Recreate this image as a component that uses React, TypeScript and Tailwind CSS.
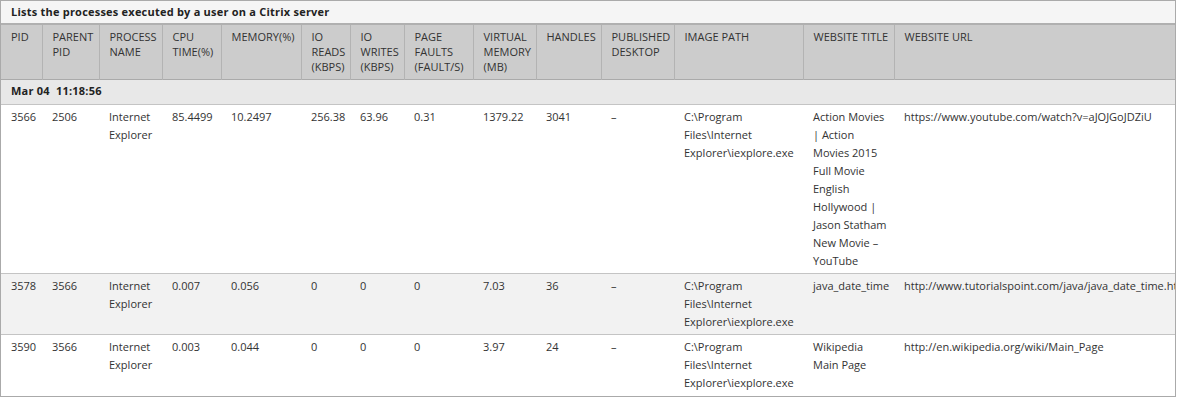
import React from "react";

type Row = {
  pid: string;
  parent: string;
  name: string;
  cpu: string;
  mem: string;
  ioR: string;
  ioW: string;
  faults: string;
  vmem: string;
  handles: string;
  desktop: string;
  path: string;
  title: string;
  url: string;
};

const columns = [
  { label: "PID", w: "w-[41px]" },
  { label: "PARENT PID", w: "w-[57px]" },
  { label: "PROCESS NAME", w: "w-[63px]" },
  { label: "CPU TIME(%)", w: "w-[59px]" },
  { label: "MEMORY(%)", w: "w-[80px]" },
  { label: "IO READS (KBPS)", w: "w-[49px]" },
  { label: "IO WRITES (KBPS)", w: "w-[54px]" },
  { label: "PAGE FAULTS (FAULT/S)", w: "w-[69px]" },
  { label: "VIRTUAL MEMORY (MB)", w: "w-[63px]" },
  { label: "HANDLES", w: "w-[65px]" },
  { label: "PUBLISHED DESKTOP", w: "w-[73px]" },
  { label: "IMAGE PATH", w: "w-[129px]" },
  { label: "WEBSITE TITLE", w: "w-[91px]" },
  { label: "WEBSITE URL", w: "w-[340px]" },
];

const rows: Row[] = [
  {
    pid: "3566",
    parent: "2506",
    name: "Internet Explorer",
    cpu: "85.4499",
    mem: "10.2497",
    ioR: "256.38",
    ioW: "63.96",
    faults: "0.31",
    vmem: "1379.22",
    handles: "3041",
    desktop: "–",
    path: "C:\\Program Files\\Internet Explorer\\iexplore.exe",
    title: "Action Movies | Action Movies 2015 Full Movie English Hollywood | Jason Statham New Movie – YouTube",
    url: "https://www.youtube.com/watch?v=aJOJGoJDZiU",
  },
  {
    pid: "3578",
    parent: "3566",
    name: "Internet Explorer",
    cpu: "0.007",
    mem: "0.056",
    ioR: "0",
    ioW: "0",
    faults: "0",
    vmem: "7.03",
    handles: "36",
    desktop: "–",
    path: "C:\\Program Files\\Internet Explorer\\iexplore.exe",
    title: "java_date_time",
    url: "http://www.tutorialspoint.com/java/java_date_time.htm",
  },
  {
    pid: "3590",
    parent: "3566",
    name: "Internet Explorer",
    cpu: "0.003",
    mem: "0.044",
    ioR: "0",
    ioW: "0",
    faults: "0",
    vmem: "3.97",
    handles: "24",
    desktop: "–",
    path: "C:\\Program Files\\Internet Explorer\\iexplore.exe",
    title: "Wikipedia Main Page",
    url: "http://en.wikipedia.org/wiki/Main_Page",
  },
];

const cell = "pl-[10px] pr-1 pt-[3px] pb-[3px] align-top";

const App = () => {
  return (
    <div
      className="w-[1177px] h-[397px] bg-white overflow-hidden text-[11px] text-[#333]"
      style={{ fontFamily: '"Open Sans", "Noto Sans", sans-serif' }}
    >
      <div className="w-[1176px] h-[397px] border border-[#aaa] overflow-hidden">
        {/* title bar */}
        <div className="h-[24px] bg-[#f5f5f5] border-b-2 border-[#b0b0b0] pl-[10px] flex items-center font-bold tracking-[0.22px] text-[#222]">
          Lists the processes executed by a user on a Citrix server
        </div>

        <table className="table-fixed border-collapse w-[1232px]">
          <colgroup>
            {columns.map((c) => (
              <col key={c.label} className={c.w} />
            ))}
          </colgroup>
          <thead>
            <tr className="bg-[#cccccc] h-[54px] border-b border-[#aaa]">
              {columns.map((c, i) => (
                <th
                  key={c.label}
                  className={`pl-[10px] pr-1 pt-[4px] align-top text-left font-normal leading-[15px] text-[#333] ${
                    i < columns.length - 1 ? "border-r border-[#b3b3b3]" : ""
                  }`}
                >
                  {c.label}
                </th>
              ))}
            </tr>
          </thead>
          <tbody>
            <tr className="bg-[#e8e8e8] h-[25px] border-b border-[#c4c4c4]">
              <td colSpan={14} className="pl-[10px] font-bold tracking-[0.22px] text-[#222] whitespace-pre">
                Mar 04  11:18:56
              </td>
            </tr>
            {rows.map((r, i) => (
              <tr
                key={r.pid}
                className={`leading-[18px] border-b border-[#c4c4c4] ${
                  i === 1 ? "bg-[#f2f2f2] h-[60px]" : i === 2 ? "bg-white h-[63px]" : "bg-white h-[167px]"
                }`}
              >
                <td className={cell}>{r.pid}</td>
                <td className={cell}>{r.parent}</td>
                <td className={cell}>{r.name}</td>
                <td className={cell}>{r.cpu}</td>
                <td className={cell}>{r.mem}</td>
                <td className={cell}>{r.ioR}</td>
                <td className={cell}>{r.ioW}</td>
                <td className={cell}>{r.faults}</td>
                <td className={cell}>{r.vmem}</td>
                <td className={cell}>{r.handles}</td>
                <td className={cell}>{r.desktop}</td>
                <td className={cell}>{r.path}</td>
                <td className={cell}>{r.title}</td>
                <td className={`${cell} whitespace-nowrap`}>{r.url}</td>
              </tr>
            ))}
          </tbody>
        </table>
      </div>
    </div>
  );
};

export default App;
